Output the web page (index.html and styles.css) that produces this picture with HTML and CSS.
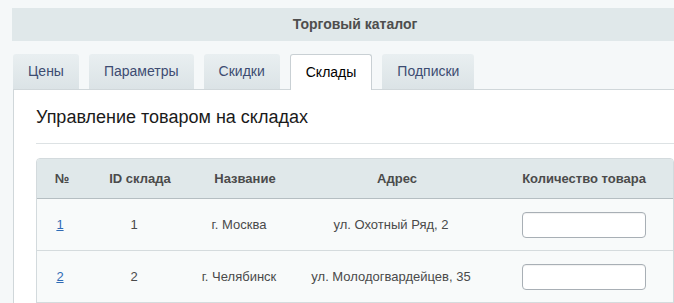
FILE: index.html
```html
<!DOCTYPE html>
<html lang="ru">

<head>
    <meta charset="UTF-8">
    <meta name="viewport" content="width=device-width, initial-scale=1.0">
    <title>Торговый каталог</title>
    <link rel="stylesheet" href="styles.css">
</head>

<body>
    <div class="section-title">Торговый каталог</div>

    <div class="wrapper">
        <!-- Tabs -->
        <div class="tabs">
            <a class="tab" href="#">Цены</a>
            <a class="tab" href="#">Параметры</a>
            <a class="tab" href="#">Скидки</a>
            <a class="tab active" href="#">Склады</a>
            <a class="tab" href="#">Подписки</a>
        </div>

        <div class="panel">
            <h2 class="panel-title">Управление товаром на складах</h2>
            <div class="separator"></div>

            <table class="store-table">
                <colgroup>
                    <col class="col-num">
                    <col class="col-id">
                    <col class="col-name">
                    <col class="col-address">
                    <col class="col-amount">
                </colgroup>
                <thead>
                    <tr>
                        <th>№</th>
                        <th>ID склада</th>
                        <th>Название</th>
                        <th>Адрес</th>
                        <th>Количество товара</th>
                    </tr>
                </thead>
                <tbody>
                    <tr>
                        <td><a href="#">1</a></td>
                        <td>1</td>
                        <td>г. Москва</td>
                        <td>ул. Охотный Ряд, 2</td>
                        <td><input type="text" class="amount-input"></td>
                    </tr>
                    <tr>
                        <td><a href="#">2</a></td>
                        <td>2</td>
                        <td>г. Челябинск</td>
                        <td>ул. Молодогвардейцев, 35</td>
                        <td><input type="text" class="amount-input"></td>
                    </tr>
                </tbody>
            </table>
        </div>
    </div>
</body>

</html>
```

FILE: styles.css
```css
html,
body {
    overflow: hidden;
}

body {
    margin: 0;
    padding-top: 8px;
    background-color: #f5f8f9;
    font-family: 'Liberation Sans', Arial, sans-serif;
    font-size: 13px;
    color: #4b4b4b;
}

.section-title {
    margin-left: 12px;
    width: 686px;
    height: 33px;
    line-height: 33px;
    background-color: #e0e8ea;
    text-align: center;
    font-weight: bold;
    font-size: 14px;
    color: #4e4e4e;
}

.wrapper {
    margin-left: 13px;
    width: 683px;
}

.tabs {
    display: flex;
    margin-top: 13px;
    height: 35px;
}

.tab {
    display: block;
    box-sizing: border-box;
    height: 35px;
    line-height: 35px;
    padding: 0 15px;
    margin-right: 10px;
    border-radius: 3px 3px 0 0;
    background: linear-gradient(to bottom, #e9eff1, #dbe3e6);
    color: #3d4c72;
    font-size: 14px;
    text-decoration: none;
}

.tab.active {
    position: relative;
    z-index: 1;
    height: 36px;
    line-height: 34px;
    background: #fff;
    border: 1px solid #c9d0d4;
    border-bottom: none;
    color: #000;
}

.panel {
    background-color: #fff;
    border-top: 1px solid #d0d7da;
    border-left: 1px solid #d0d7da;
    padding: 16px 0 0 22px;
    min-height: 300px;
}

.panel-title {
    margin: 0;
    font-size: 18px;
    line-height: 22px;
    font-weight: normal;
    color: #1a1a1a;
}

.separator {
    margin-top: 15px;
    height: 1px;
    background-color: #dde2e4;
}

.store-table {
    margin-top: 14px;
    width: 637px;
    table-layout: fixed;
    border-collapse: separate;
    border-spacing: 0;
    border: 1px solid #d3dadd;
    border-radius: 4px 4px 0 0;
    background-color: #f8fafa;
}

.col-num {
    width: 46px;
}

.col-id {
    width: 102px;
}

.col-name {
    width: 108px;
}

.col-address {
    width: 196px;
}

.col-amount {
    width: 184px;
}

.store-table th {
    height: 39px;
    padding: 0 0 0 12px;
    background-color: #e0e8ea;
    border-bottom: 1px solid #b5bec2;
    font-weight: bold;
    color: #4b4b4b;
    text-align: center;
}

.store-table th:first-child {
    padding-left: 4px;
    border-top-left-radius: 3px;
}

.store-table th:last-child {
    padding-left: 6px;
    border-top-right-radius: 3px;
}

.store-table td {
    height: 51px;
    padding: 0;
    border-bottom: 1px solid #d5dbdd;
    text-align: center;
    color: #4a4a4a;
}

.store-table td:last-child {
    padding-left: 6px;
}

.store-table a {
    color: #2f6bb5;
}

.amount-input {
    box-sizing: border-box;
    width: 124px;
    height: 26px;
    border: 1px solid #a8afb5;
    border-radius: 4px;
    box-shadow: inset 0 1px 1px rgba(0, 0, 0, 0.06);
    background-color: #fff;
    vertical-align: middle;
}
```
